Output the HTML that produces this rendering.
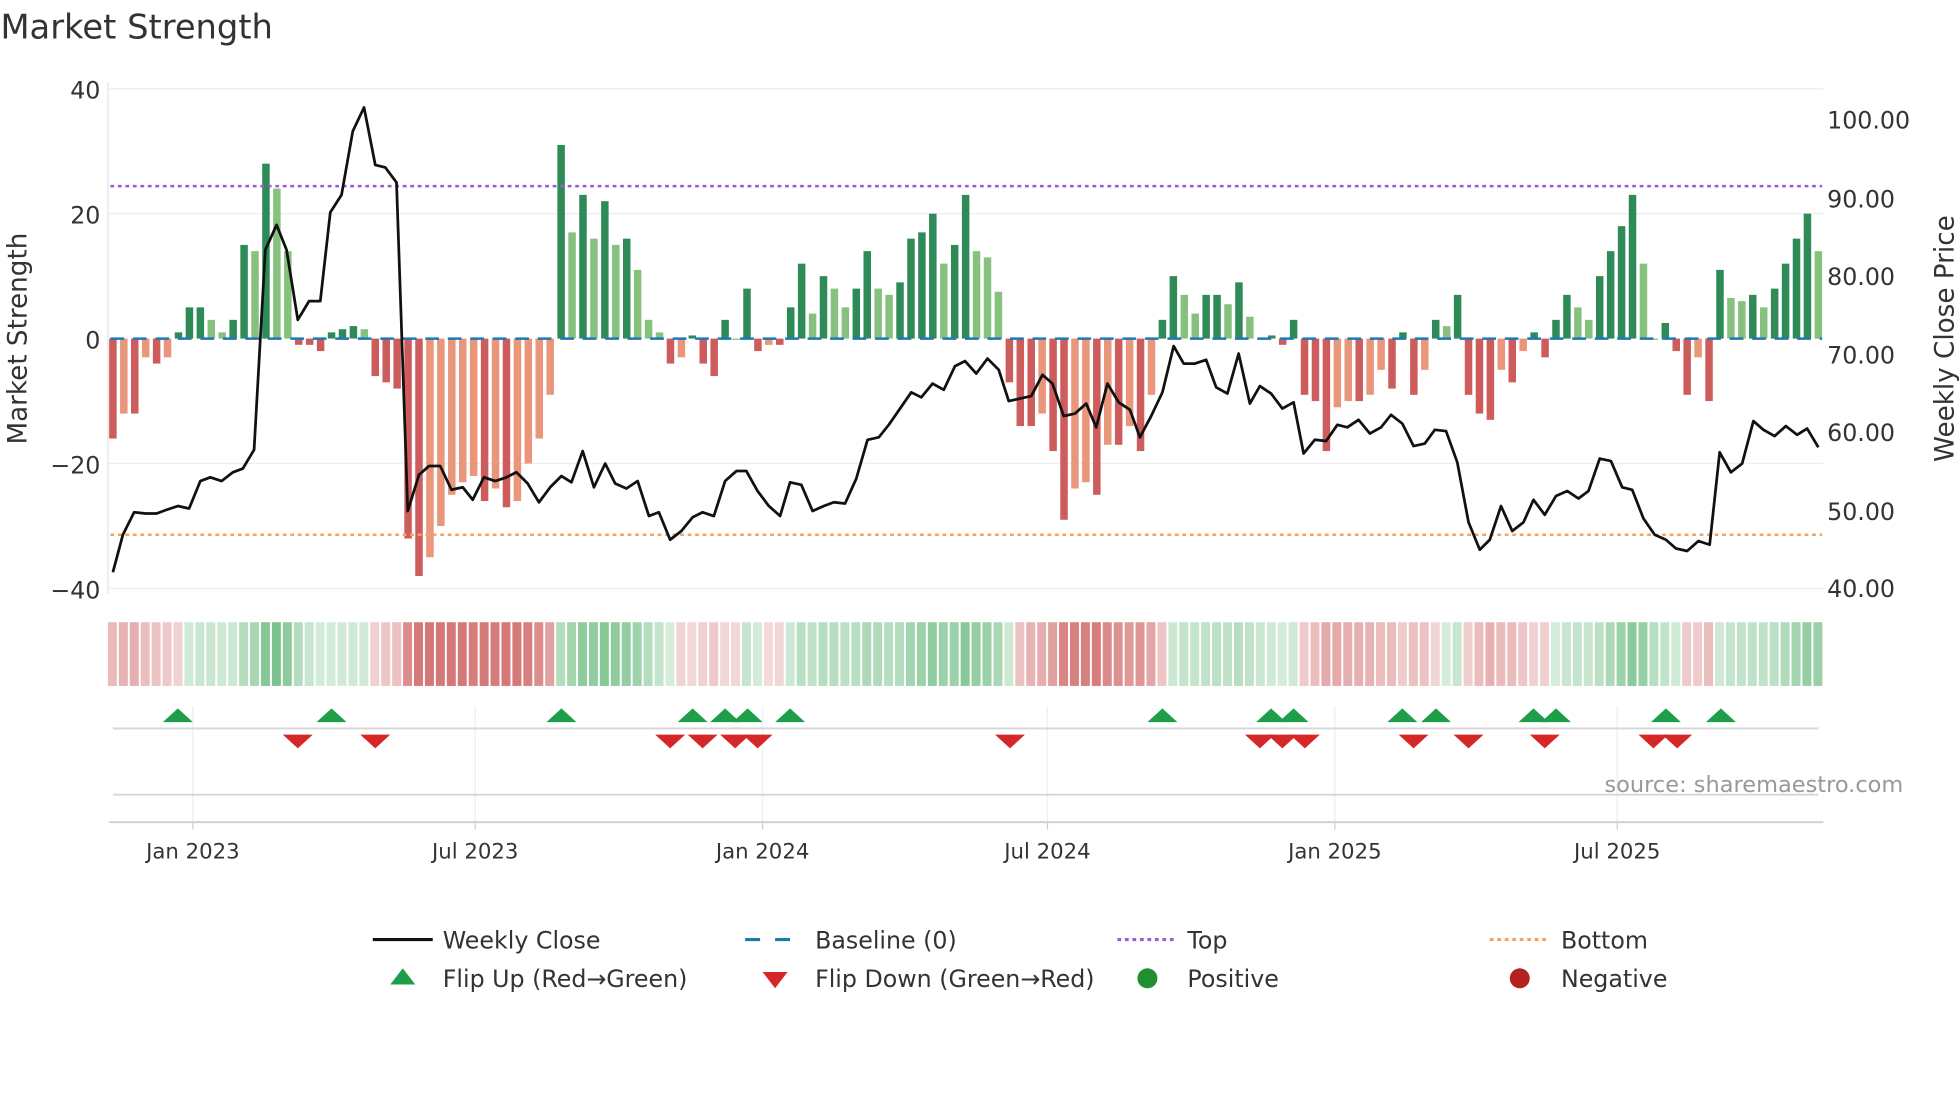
<!DOCTYPE html>
<html><head><meta charset="utf-8"><style>
html,body{margin:0;padding:0;background:#fff;width:1960px;height:1102px;overflow:hidden}
svg{display:block;font-family:"DejaVu Sans","Liberation Sans",sans-serif}
</style></head><body>
<svg id="s" width="1960" height="1102" viewBox="0 0 1568 882" xmlns="http://www.w3.org/2000/svg">
<text x="0" y="31" font-size="27" fill="#333">Market Strength</text>
<g stroke="#ececf2" stroke-width="1">
<line x1="87" y1="71" x2="1459" y2="71"/><line x1="87" y1="171" x2="1459" y2="171"/>
<line x1="87" y1="371" x2="1459" y2="371"/><line x1="87" y1="471" x2="1459" y2="471"/>
</g>
<line x1="86" y1="66" x2="86" y2="475" stroke="#e4e4e8"/>
<g font-size="19" fill="#333" text-anchor="end">
<text x="80" y="79">40</text><text x="80" y="179">20</text><text x="80" y="279">0</text>
<text x="80" y="379">−20</text><text x="80" y="479">−40</text></g>
<g font-size="19" fill="#333">
<text x="1462" y="103">100.00</text><text x="1462" y="166">90.00</text><text x="1462" y="228">80.00</text>
<text x="1462" y="291">70.00</text><text x="1462" y="353">60.00</text><text x="1462" y="416">50.00</text><text x="1462" y="478">40.00</text></g>
<text transform="translate(21,271) rotate(-90)" font-size="21" fill="#333" text-anchor="middle">Market Strength</text>
<text transform="translate(1563,271) rotate(-90)" font-size="21" fill="#333" text-anchor="middle">Weekly Close Price</text>
<g id="bars"></g>
<line x1="88" y1="271" x2="1458" y2="271" stroke="#1f77b4" stroke-width="2" stroke-dasharray="11,7"/>
<line x1="88" y1="149" x2="1458" y2="149" stroke="#9b59d6" stroke-width="2" stroke-dasharray="3,3"/>
<line x1="88" y1="428" x2="1458" y2="428" stroke="#f4a460" stroke-width="2" stroke-dasharray="3,3"/>
<polyline id="price" fill="none" stroke="#111" stroke-width="2.2" stroke-linejoin="round"/>
<g id="strip"></g>
<g stroke="#eef0f4" stroke-width="1.2">
<line x1="154" y1="565" x2="154" y2="658"/><line x1="380" y1="565" x2="380" y2="658"/><line x1="610" y1="565" x2="610" y2="658"/>
<line x1="838" y1="565" x2="838" y2="658"/><line x1="1068" y1="565" x2="1068" y2="658"/><line x1="1294" y1="565" x2="1294" y2="658"/></g>
<line x1="90" y1="583" x2="1455" y2="583" stroke="#d6d6d6" stroke-width="1.5"/>
<line x1="90" y1="636" x2="1455" y2="636" stroke="#d6d6d6" stroke-width="1.5"/>
<line x1="87" y1="658" x2="1459" y2="658" stroke="#cfcfcf" stroke-width="1.5"/>
<g stroke="#cfcfcf"><line x1="154" y1="658" x2="154" y2="664"/><line x1="380" y1="658" x2="380" y2="664"/><line x1="610" y1="658" x2="610" y2="664"/><line x1="838" y1="658" x2="838" y2="664"/><line x1="1068" y1="658" x2="1068" y2="664"/><line x1="1294" y1="658" x2="1294" y2="664"/></g>
<g id="marks"></g>
<text x="1523" y="634" font-size="18" fill="#999" text-anchor="end">source: sharemaestro.com</text>
<g font-size="17" fill="#333" text-anchor="middle">
<text x="154" y="687">Jan 2023</text><text x="380" y="687">Jul 2023</text><text x="610" y="687">Jan 2024</text>
<text x="838" y="687">Jul 2024</text><text x="1068" y="687">Jan 2025</text><text x="1294" y="687">Jul 2025</text></g>
<g font-size="19" fill="#333">
<line x1="298" y1="752" x2="346" y2="752" stroke="#111" stroke-width="2.5"/><text x="354" y="759">Weekly Close</text>
<line x1="596" y1="752" x2="644" y2="752" stroke="#1f77b4" stroke-width="2.5" stroke-dasharray="12,12"/><text x="652" y="759">Baseline (0)</text>
<line x1="894" y1="752" x2="942" y2="752" stroke="#9b59d6" stroke-width="2.5" stroke-dasharray="3,3"/><text x="950" y="759">Top</text>
<line x1="1192" y1="752" x2="1240" y2="752" stroke="#f4a460" stroke-width="2.5" stroke-dasharray="3,3"/><text x="1249" y="759">Bottom</text>
<polygon points="312,788 332,788 322,775" fill="#1f9e4a"/><text x="354" y="790">Flip Up (Red→Green)</text>
<polygon points="610,778 630,778 620,791" fill="#d62728"/><text x="652" y="790">Flip Down (Green→Red)</text>
<circle cx="918" cy="783" r="8" fill="#1f8f2f"/><text x="950" y="790">Positive</text>
<circle cx="1216" cy="783" r="8" fill="#b22222"/><text x="1249" y="790">Negative</text>
</g>
</svg>
<script>
var ns="http://www.w3.org/2000/svg";
var v=[-16,-12,-12,-3,-4,-3,1,5,5,3,1,3,15,14,28,24,14,-1,-1,-2,1,1.5,2,1.5,-6,-7,-8,-32,-38,-35,-30,-25,-23,-22,-26,-24,-27,-26,-20,-16,-9,31,17,23,16,22,15,16,11,3,1,-4,-3,0.5,-4,-6,3,0,8,-2,-1,-1,5,12,4,10,8,5,8,14,8,7,9,16,17,20,12,15,23,14,13,7.5,-7,-14,-14,-12,-18,-29,-24,-23,-25,-17,-17,-14,-18,-9,3,10,7,4,7,7,5.5,9,3.5,0,0.5,-1,3,-9,-10,-18,-11,-10,-10,-9,-5,-8,1,-9,-5,3,2,7,-9,-12,-13,-5,-7,-2,1,-3,3,7,5,3,10,14,18,23,12,0,2.5,-2,-9,-3,-10,11,6.5,6,7,5,8,12,16,20,14];
var n=v.length,x0=90,dx=(1455-90)/(n-1);
var bars=document.getElementById('bars'),strip=document.getElementById('strip');
function r(p,a){var e=document.createElementNS(ns,'rect');for(var k in a)e.setAttribute(k,a[k]);p.appendChild(e);}
var sm=0;
for(var i=0;i<n;i++){var x=x0+i*dx,val=v[i],p=i?v[i-1]:val,c;
 if(val>=0)c=(val>=p)?'#2e8b57':'#86c27e';else c=(val<=p)?'#cd5c5c':'#e9967a';
 var y=271-val*5;r(bars,{x:x-3,y:Math.min(y,271),width:6,height:Math.max(Math.abs(val*5),1),fill:c});
 sm=sm*0.5+val*0.5;var t=Math.min(Math.abs(sm)/25,1),a=0.22+0.55*t;
 var col=sm>=0?'rgba(70,170,95,'+a+')':'rgba(200,80,80,'+a+')';
 r(strip,{x:x-4,y:498,width:7.2,height:51,fill:col});}
var P=[[90,458],[98,428],[107,410],[116,411],[125,411],[133,408],[142,405],[151,407],[160,385],[168,382],[177,385],[186,378],[194,375],[203,360],[212,200],[221,180],[229,200],[238,256],[247,241],[256,241],[264,170],[273,156],[282,105],[291,86],[300,132],[308,134],[317,146],[326,409],[335,380],[343,373],[352,373],[361,392],[370,390],[378,400],[387,382],[396,385],[405,382],[413,378],[422,387],[431,402],[440,390],[449,381],[457,386],[466,361],[475,390],[484,371],[492,387],[501,391],[510,385],[519,413],[527,410],[536,432],[545,425],[554,414],[562,410],[571,413],[580,385],[589,377],[597,377],[606,393],[615,405],[624,413],[632,386],[641,388],[650,409],[659,405],[667,402],[676,403],[685,383],[694,352],[703,350],[711,340],[720,327],[729,314],[737,318],[746,307],[755,312],[764,293],[772,289],[781,299],[790,287],[799,296],[807,321],[816,319],[825,317],[834,300],[842,307],[851,333],[860,331],[869,323],[877,342],[886,307],[895,322],[904,328],[912,350],[921,333],[930,314],[939,277],[947,291],[956,291],[965,288],[973,310],[982,315],[991,283],[1000,323],[1008,309],[1017,315],[1026,327],[1035,322],[1043,363],[1052,352],[1061,353],[1070,340],[1078,342],[1087,336],[1096,347],[1105,342],[1113,332],[1122,339],[1131,357],[1140,355],[1148,344],[1157,345],[1166,370],[1175,418],[1184,440],[1192,432],[1201,405],[1210,425],[1219,418],[1227,400],[1236,412],[1245,397],[1254,393],[1263,399],[1271,393],[1280,367],[1289,369],[1298,390],[1306,392],[1315,415],[1324,428],[1333,432],[1341,439],[1350,441],[1359,433],[1368,436],[1376,362],[1385,378],[1394,371],[1403,337],[1411,344],[1420,349],[1429,341],[1438,348],[1446,343],[1455,358]];
document.getElementById('price').setAttribute('points',P.map(function(q){return q.join(',')}).join(' '));
var m=document.getElementById('marks');
[142,265,449,554,580,598,632,930,1017,1035,1122,1149,1227,1245,1333,1377].forEach(function(x){var e=document.createElementNS(ns,'polygon');e.setAttribute('points',(x-12)+',578 '+(x+12)+',578 '+x+',567');e.setAttribute('fill','#1f9e4a');m.appendChild(e);});
[238,300,536,562,588,606,808,1008,1026,1044,1131,1175,1236,1323,1342].forEach(function(x){var e=document.createElementNS(ns,'polygon');e.setAttribute('points',(x-12)+',588 '+(x+12)+',588 '+x+',599');e.setAttribute('fill','#d62728');m.appendChild(e);});
</script>
</body></html>
